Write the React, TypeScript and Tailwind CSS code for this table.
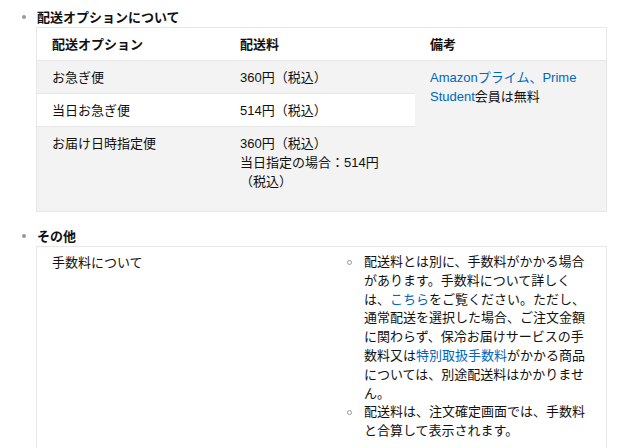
const font = {
  fontFamily: '"Liberation Sans", "Noto Sans CJK JP", sans-serif',
};

function Link({ children }: { children: React.ReactNode }) {
  return <span className="text-[#0066c0]">{children}</span>;
}

function Section({ title, children }: { title: string; children: React.ReactNode }) {
  return (
    <li className="relative">
      <span className="absolute left-[-14px] top-[7px] h-[4px] w-[4px] rounded-full bg-[#999]" />
      <div className="pl-[1px] text-[13px] font-bold leading-[19px] text-[#111]">{title}</div>
      {children}
    </li>
  );
}

const fees = [
  <>
    配送料とは別に、手数料がかかる場合があります。手数料について詳しくは、<Link>こちら</Link>
    をご覧ください。ただし、通常配送を選択した場合、ご注文金額に関わらず、保冷お届けサービスの手数料又は
    <Link>特別取扱手数料</Link>がかかる商品については、別途配送料はかかりません。
  </>,
  <>配送料は、注文確定画面では、手数料と合算して表示されます。</>,
];

export default function App() {
  return (
    <div style={font} className="h-[448px] w-[643px] overflow-hidden bg-white text-[13px] leading-[19px] text-[#111]">
      <ul className="pl-[36px] pr-[36px] pt-[8px]">
        <Section title="配送オプションについて">
          <div className="border border-[#e7e7e7]">
            <div className="grid grid-cols-[188px_190px_1fr]">
              <div className="border-b border-[#e7e7e7] px-[15px] pb-[6px] pt-[7px] font-bold">配送オプション</div>
              <div className="border-b border-[#e7e7e7] px-[15px] pb-[6px] pt-[7px] font-bold">配送料</div>
              <div className="border-b border-[#e7e7e7] px-[15px] pb-[6px] pt-[7px] font-bold">備考</div>

              <div className="border-b border-[#e7e7e7] bg-[#f3f3f3] px-[15px] pb-[6px] pt-[7px]">お急ぎ便</div>
              <div className="border-b border-[#e7e7e7] bg-[#f3f3f3] px-[15px] pb-[6px] pt-[7px]">360円（税込）</div>
              <div className="row-span-3 bg-[#f3f3f3] pl-[15px] pr-[8px] pt-[7px]">
                <Link>Amazonプライム、Prime Student</Link>会員は無料
              </div>

              <div className="border-b border-[#e7e7e7] bg-white px-[15px] pb-[6px] pt-[7px]">当日お急ぎ便</div>
              <div className="border-b border-[#e7e7e7] bg-white px-[15px] pb-[6px] pt-[7px]">514円（税込）</div>

              <div className="bg-[#f3f3f3] px-[15px] pb-[20px] pt-[7px]">お届け日時指定便</div>
              <div className="bg-[#f3f3f3] px-[15px] pb-[20px] pt-[7px]">
                360円（税込）
                <br />
                当日指定の場合：514円（税込）
              </div>
            </div>
          </div>
        </Section>

        <div className="h-[15px]" />

        <Section title="その他">
          <div className="flex border border-[#e7e7e7] pb-[20px]">
            <div className="w-[290px] shrink-0 px-[15px] pt-[6px]">手数料について</div>
            <ul className="flex-1 pl-[37px] pr-[16px] pt-[6px] leading-[18.8px]">
              {fees.map((f, i) => (
                <li key={i} className="relative">
                  <span className="absolute left-[-17px] top-[7px] h-[5px] w-[5px] rounded-full border border-[#999]" />
                  {f}
                </li>
              ))}
            </ul>
          </div>
        </Section>
      </ul>
    </div>
  );
}
